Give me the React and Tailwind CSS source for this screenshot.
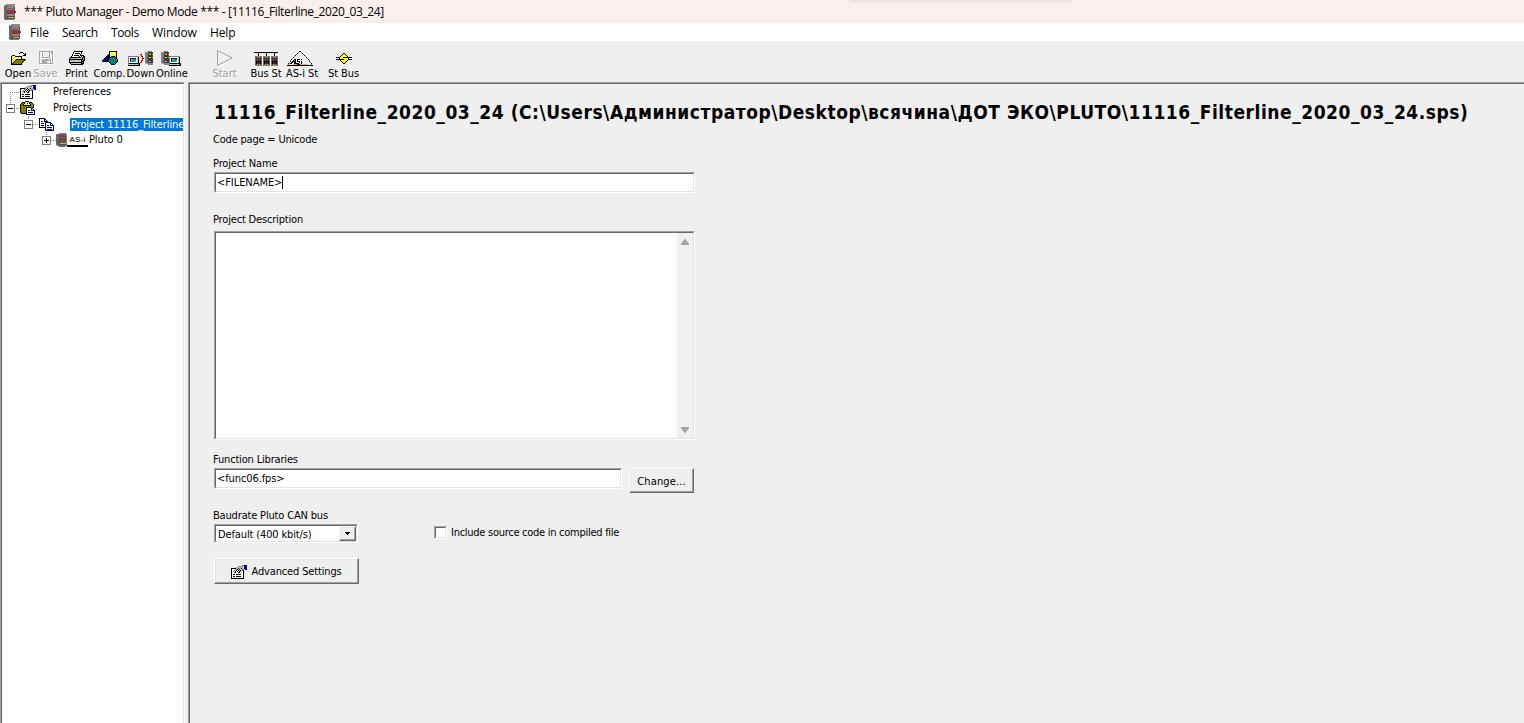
import React from 'react';

const PALETTE = {
  k: '#000000', w: '#ffffff', g: '#808080', l: '#c0c0c0', d: '#505050', y: '#ffff00', o: '#808000',
  b: '#0000a0', n: '#000080', t: '#008080', c: '#00d8d8', r: '#ff0000', a: '#a8a8a8', p: '#ffff9c', s: '#666666',
  e: '#383838', f: '#8a8a8a', q: '#d0bc30', m: '#e01438', z: '#303058', h: '#e0c020',
};

function Pixels({ rows, className = '' }) {
  const w = Math.max(...rows.map((r) => r.length));
  const cells = [];
  rows.forEach((row, y) => {
    let x = 0;
    while (x < row.length) {
      const ch = row[x];
      let n = 1;
      while (row[x + n] === ch) n++;
      if (PALETTE[ch]) cells.push(<rect key={`${x}-${y}`} x={x} y={y} width={n} height={1} fill={PALETTE[ch]} />);
      x += n;
    }
  });
  return (
    <svg width={w} height={rows.length} viewBox={`0 0 ${w} ${rows.length}`} shapeRendering="crispEdges" className={`block shrink-0 ${className}`}>
      {cells}
    </svg>
  );
}

const OPEN = [
  '..........kkk...',
  '.........k...k.k',
  '..............kk',
  '..kkk........kkk',
  '.kpypkkkkkkk....',
  '.kypypypypyk....',
  '.kpypypypypk....',
  '.kypypkkkkkkkkkk',
  '.kpypkooooooook.',
  '.kypkooooooook..',
  '.kpkooooooook...',
  '.kkooooooook....',
  '.kkkkkkkkkkk....',
];
const SAVE = [
  'aaaaaaaaaaaaaa.',
  'awwaw.....awaaw',
  'a.wa......a.aaw',
  'a.wa......a.waw',
  'a.wa......a.waw',
  'a.wa......a.waw',
  'a..aaaaaaaa.waw',
  'a..wwwwwwwwwwaw',
  'a..aaaaaaaaa.aw',
  'a..aaaaaaawa.aw',
  'a..aaaaa..wa.aw',
  'a..aaaaa..wa.aw',
  'aaaaaaaaaaaaaaw',
  '.wwwwwwwwwwwwww',
];
const PRINT = [
  '.....kkkkkkkkk..',
  '....kwwwwwwwk...',
  '....kwkkkkkwk...',
  '...kwwwwwwwk....',
  '...kwkkkkkwkkkk.',
  '..kwwwwwwwk.k.kk',
  '.kkkkkkkkkkk.kgk',
  'kllllllllllllkgk',
  'kkkkkkkkkkkkkkgk',
  'klllllyyllllkgkk',
  'klllllllllllkkk.',
  'kkkkkkkkkkkkkgk.',
  '.kllllllllllkkk.',
  '..kkkkkkkkkkkk..',
];
const COMP = [
  '.......kkkkkkkk',
  '.......kypyypyk',
  '.......kyyypyyk',
  '......nkpyyyypk',
  '.....nnkyypyyyk',
  '....nnnkykkkkyk',
  '...nnnnkkttttkk',
  '..nnnnnkttttttk',
  '.nnnnnkttttttttk',
  'nnnnnnkttttttttk',
  'kkkkkkkttttttttk',
  '.......kttttttk',
  '........kttttk.',
  '.........kkkk..',
];
const DEV = [
  '..ggggg.',
  'gg.dddee',
  'gfsdddee',
  'gfsdhheh',
  'gfseeeee',
  'gfsdzzze',
  'gfsdhheh',
  'gfsdeeee',
  'gfszzzde',
  'gfsdeeee',
  'gfsdhhee',
  'gfsdeeee',
  '.ggffffg',
  '...ggggg',
];
const PC = [
  'ggggggggggg.',
  'gwwwwwwwwlk.',
  'gwkkkkkkwlk.',
  'gwkcccttwlk.',
  'gwkccttcwlk.',
  'gwkcttccwlk.',
  'gwwwwwwwwlk.',
  'gkkkkkkkkkkk',
  'gwllllllllsk',
  'kkkkkkkkkkkk',
];
const ARROW = ['rr..', '.r..', '.rr.', '..r.', '..rr', '..r.', '.rr.', '.r..', 'rr..'];
const PREF = [
  '...........ggbbb',
  '.......gggggwbbb',
  '.....glllllllbbb',
  'kkkkkglkllkllbbb',
  'kwwwglklkllgg.bb',
  'kwwglkwklkggk...',
  'kwglkwkwkgwwk...',
  'kwwgkwwkkwwwk...',
  'kwwwwwwwwwwwk...',
  'kwkkwkkkkkwwk...',
  'kwwwwwwwwwwwk...',
  'kwkkwkkkkkwwk...',
  'kwwwwwwwwwwwk...',
  'kkkkkkkkkkkkk...',
];
const CLIP = [
  '.....kkkk......',
  '..kkkyyyykkk...',
  '.kookyykykook..',
  'kookyyyyyykook.',
  'kookkkkkkkkook.',
  'kooooooooooook.',
  'kooooonnnnnook.',
  'kooooonwwwwnn..',
  'kooooonwwwwnwn.',
  'kooooonwnnwnnnn',
  'kooooonwwwwwwwn',
  'kooooonwnnnnnwn',
  '.kkkkknwwwwwwwn',
  '......nnnnnnnnn',
];
const COPY = [
  'kkkkkk.........',
  'kwwwwkk........',
  'kwwwwkwk.......',
  'kwkkwkkkk......',
  'kwwwwwnnnnnn...',
  'kwkkkwnwwwwnn..',
  'kwwwwwnwwwwnwn.',
  'kwkkkwnwnnwnnnn',
  'kwwwwwnwwwwwwwn',
  'kkkkkknwnnnnnwn',
  '......nwwwwwwwn',
  '......nwnnnnnwn',
  '......nnnnnnnnn',
];
const APP = [
  '..fffffffff.',
  'ffffffffffg.',
  'ssssggggggf.',
  'sssfffffffd.',
  'sssgdgdgdgd.',
  'sssgggggggd.',
  'sssdddddddd.',
  'sssdmmmmmmmd',
  'sssdmmmmmmed',
  'sssdddddddd.',
  'sssgffffffg.',
  'sssgffffffg.',
  'sssdddddddd.',
  'sssdgqqqqqd.',
  'dssdddddddd.',
  '.ddggggggg..',
];
const BUS = [
  'kkkkkkkkkkkkkkkkkkkkkkkk',
  '....k.......k.......k...',
  '....k.......k.......k...',
  '....k.......k.......k...',
  '.ggggggg.ggggggg.ggggggg',
  '.sehehes.sehehes.sehehes',
  '.seeeees.seeeees.seeeees',
  '.seedees.seedees.seedees',
  '.semmmes.semmmes.semmmes',
  '.skkkkks.skkkkks.skkkkks',
  '.skzzzks.skzzzks.skzzzks',
  '.skeeeks.skeeeks.skeeeks',
  '.sehehes.sehehes.sehehes',
  '.ggggggg.ggggggg.ggggggg',
];
const ASI = [
  '............kk............',
  '...........g..g...........',
  '..........k....k..........',
  '.........g......g.........',
  '........k........k........',
  '.......g..........g.......',
  '......k............k......',
  '.....g..............g.....',
  '....k..kk.kkk.k......k....',
  '...g..kgk.k...........g...',
  '...k.kkkk.kkk.k.......k...',
  '..g.kk.kk...k.k........g..',
  '.k.kk..kkkkk..k.........k.',
  '.g....qqqqkkkqqqqqqqq...g.',
  'kkkkkkkkkkkkkkkkkkkkkkkkkk',
];
const STBUS = [
  '.......kk.......',
  '......kyyk......',
  '.....kyyyyk.....',
  '....kyyyyyyk....',
  'kkkkyyykkkkkkkkk',
  '...kyyyyyyyyk...',
  'kkkkkkkkyyyykkkk',
  '....kyyyyyyk....',
  '.....kyyyyk.....',
  '......kyyk......',
  '.......kk.......',
];
const TREEDEV = [
  '...ggggggg.',
  'ssssssssssg',
  'sssddddddgg',
  'sssdddddddg',
  'sssdsssssdg',
  'sssdddddddg',
  'sssdmmmmmmg',
  'sssdddddddg',
  'sssdsssssdg',
  'sssdddddddg',
  'sssdqqqqqqg',
  'sssdddddddg',
  '.ssssssssss',
  '...ssssss..',
];

const SUNK = 'border border-t-[#a0a0a0] border-l-[#a0a0a0] border-r-white border-b-white';
const SUNK_IN = 'border border-t-[#696969] border-l-[#696969] border-r-[#e3e3e3] border-b-[#e3e3e3]';

function Sunken({ className = '', children, inner = '' }) {
  return (
    <div className={`${SUNK} ${className}`}>
      <div className={`${SUNK_IN} flex h-full bg-white ${inner}`}>{children}</div>
    </div>
  );
}

function Raised({ className = '', inner = '', children }) {
  return (
    <button className={`block border border-t-white border-l-white border-r-[#696969] border-b-[#696969] ${className}`}>
      <span className={`flex h-full items-center justify-center border border-t-[#e3e3e3] border-l-[#e3e3e3] border-r-[#a0a0a0] border-b-[#a0a0a0] ${inner}`}>{children}</span>
    </button>
  );
}

function Tool({ label, className, text = '', children }) {
  return (
    <div className={`flex shrink-0 flex-col items-center ${className}`}>
      <div className="flex h-[18px] items-center justify-center">{children}</div>
      <span className={`h-[13px] whitespace-nowrap leading-[13px] ${text}`}>{label}</span>
    </div>
  );
}

function Expander({ open, className = '' }) {
  return (
    <svg width="9" height="9" viewBox="0 0 9 9" shapeRendering="crispEdges" className={`block shrink-0 ${className}`}>
      <rect x="0.5" y="0.5" width="8" height="8" fill="#fff" stroke="#808080" />
      <path d="M2 4.5H7" stroke="#000" />
      {!open && <path d="M4.5 2V7" stroke="#000" />}
    </svg>
  );
}

function Tree() {
  return (
    <div className="relative w-full overflow-hidden text-[11px]">
      <svg className="absolute left-0 top-0" width="60" height="64" viewBox="0 0 60 64" shapeRendering="crispEdges" fill="none" stroke="#808080" strokeDasharray="1 1">
        <path d="M8.5 8V20M8 8.5H18M12 24.5H18M26.5 32V37M31 40.5H36M44.5 48V53M49 56.5H54" />
      </svg>
      <div className="relative flex h-4 items-center">
        <Pixels rows={PREF} className="ml-[18px]" />
        <span className="ml-[17px] h-[14px] whitespace-nowrap leading-[14px]">Preferences</span>
      </div>
      <div className="relative flex h-4 items-center">
        <Expander open className="ml-1" />
        <Pixels rows={CLIP} className="ml-[5px]" />
        <span className="ml-[18px] h-[14px] whitespace-nowrap leading-[14px]">Projects</span>
      </div>
      <div className="relative flex h-4 items-center">
        <Expander open className="ml-[22px]" />
        <Pixels rows={COPY} className="ml-[6px]" />
        <span className="ml-[16px] h-[13px] min-w-0 flex-1 whitespace-nowrap bg-[#0078d7] pl-px leading-[13px] tracking-[-0.1px] text-white">Project 11116_Filterline</span>
      </div>
      <div className="relative flex h-4 items-center">
        <Expander className="ml-10" />
        <Pixels rows={TREEDEV} className="ml-[5px]" />
        <span className="mt-[2px] flex h-[12px] w-[21px] items-center justify-center border-b-2 border-black font-['Liberation_Sans'] text-[8px] leading-[8px] tracking-[0.2px]">AS-i</span>
        <span className="ml-px h-[14px] whitespace-nowrap leading-[14px] tracking-[-0.1px]">Pluto 0</span>
      </div>
    </div>
  );
}

export default function App() {
  return (
    <div className="flex h-[723px] w-[1524px] flex-col overflow-hidden bg-[#efefef] font-['DejaVu_Sans_Condensed','DejaVu_Sans',sans-serif] text-[11px] text-black [font-stretch:condensed]">
      <header className="relative flex h-[23px] shrink-0 items-center bg-[#f9f0ed] pl-1 font-['Open_Sans','Noto_Sans',sans-serif] text-[12px] [font-stretch:normal]">
        <Pixels rows={APP} />
        <span className="ml-[8px] whitespace-nowrap tracking-[-0.36px]">*** Pluto Manager - Demo Mode *** - [11116_Filterline_2020_03_24]</span>
        <div className="absolute left-[850px] top-[-4px] h-1 w-[222px] shadow-[0_0_4px_rgba(90,60,60,0.22)]" />
      </header>
      <nav className="flex h-[18px] shrink-0 items-center bg-white pl-[9px] font-['Open_Sans','Noto_Sans',sans-serif] text-[12px] leading-[18px] [font-stretch:normal]">
        <Pixels rows={APP} />
        <span className="ml-[9px] mt-[2px] w-8">File</span>
        <span className="mt-[2px] w-[49px] tracking-[-0.4px]">Search</span>
        <span className="mt-[2px] w-[41px] tracking-[-0.4px]">Tools</span>
        <span className="mt-[2px] w-[58px] tracking-[-0.1px]">Window</span>
        <span className="mt-[2px] tracking-[-0.15px]">Help</span>
      </nav>
      <div className="flex h-[41px] shrink-0 pt-2">
        <Tool label="Open" className="ml-1 w-7"><Pixels rows={OPEN} /></Tool>
        <Tool label="Save" className="w-[27px]" text="text-[#a0a0a0] [text-shadow:1px_1px_white]"><Pixels rows={SAVE} className="ml-[2px]" /></Tool>
        <Tool label="Print" className="ml-1 w-[27px]"><Pixels rows={PRINT} className="ml-px" /></Tool>
        <Tool label="Comp." className="ml-[3px] w-[33px]"><Pixels rows={COMP} className="ml-px" /></Tool>
        <Tool label="Down" className="ml-px w-[27px]">
          <Pixels rows={PC} className="mt-[5px]" /><Pixels rows={ARROW} /><Pixels rows={DEV} className="ml-px" />
        </Tool>
        <Tool label="Online" className="ml-[2px] w-[32px]">
          <Pixels rows={DEV} className="-ml-[3px]" /><Pixels rows={PC} className="mt-[5px]" />
        </Tool>
        <Tool label="Start" className="ml-[20px] w-[33px]" text="text-[#a0a0a0] [text-shadow:1px_1px_white]">
          <svg width="18" height="18" viewBox="0 0 18 18" fill="none"><path d="M2.5 2.5L17.5 9.5L2.5 17.5" stroke="#fff" /><path d="M1.5 1.5L16.5 9L1.5 16.5Z" stroke="#a0a0a0" /></svg>
        </Tool>
        <Tool label="Bus St" className="ml-[8px] w-[34px]" text="tracking-[-0.1px]"><Pixels rows={BUS} className="mt-px" /></Tool>
        <Tool label="AS-i St" className="ml-[1px] w-[36px]" text="tracking-[-0.1px]"><Pixels rows={ASI} className="-ml-[4px]" /></Tool>
        <Tool label="St Bus" className="ml-[6px] w-[35px]" text="tracking-[-0.1px]"><Pixels rows={STBUS} /></Tool>
      </div>
      <div className="flex min-h-0 flex-1">
        <aside className="w-[185px] shrink-0 border-t border-l border-r border-t-[#a0a0a0] border-l-[#a0a0a0] border-r-white">
          <div className="flex h-full border-t border-l border-r border-t-[#696969] border-l-[#696969] border-r-[#e3e3e3] bg-white"><Tree /></div>
        </aside>
        <main className="ml-[3px] min-w-0 flex-1 border-t border-l border-t-[#a0a0a0] border-l-[#a0a0a0]">
          <div className="h-full border-t border-l border-t-[#696969] border-l-[#696969] pl-[23px]">
            <h1 className="mt-[16px] h-6 whitespace-nowrap pl-px text-[19px] font-bold leading-6 tracking-[0.53px]">11116_Filterline_2020_03_24 (C:\Users\Администратор\Desktop\всячина\ДОТ ЭКО\PLUTO\11116_Filterline_2020_03_24.sps)</h1>
            <p className="mt-[9px] h-[13px] leading-[13px] tracking-[-0.2px]">Code page = Unicode</p>
            <p className="mt-[11px] h-[13px] leading-[13px] tracking-[-0.14px]">Project Name</p>
            <Sunken className="ml-px mt-[2px] h-[21px] w-[481px]" inner="items-center pl-px">
              <span className="mt-px tracking-[-0.06px]">&lt;FILENAME&gt;</span><span className="h-[13px] w-px bg-black" />
            </Sunken>
            <p className="mt-[20px] h-[13px] leading-[13px] tracking-[-0.17px]">Project Description</p>
            <Sunken className="ml-px mt-[5px] h-[209px] w-[481px]" inner="justify-end">
              <div className="flex w-4 flex-col items-center justify-between bg-[#f0f0f0] pb-1 pt-[5px]">
                <svg width="8" height="7" viewBox="0 0 8 7"><path d="M4 .5L8 6V7H0V6Z" fill="#a3a3a3" /></svg>
                <svg width="8" height="7" viewBox="0 0 8 7"><path d="M4 6.5L8 1V0H0V1Z" fill="#a3a3a3" /></svg>
              </div>
            </Sunken>
            <p className="mt-[13px] h-[13px] leading-[13px] tracking-[-0.17px]">Function Libraries</p>
            <div className="ml-px mt-[2px] flex gap-[7px]">
              <Sunken className="h-[21px] w-[408px]" inner="items-center pl-px pt-px"><span className="tracking-[-0.1px]">&lt;func06.fps&gt;</span></Sunken>
              <Raised className="h-[25px] w-[65px]" inner="pt-[3px] tracking-[0.12px]">Change...</Raised>
            </div>
            <p className="mt-[16px] h-[13px] leading-[13px] tracking-[-0.17px]">Baudrate Pluto CAN bus</p>
            <div className="ml-px mt-[2px] flex">
              <Sunken className="h-[19px] w-[144px]" inner="items-center justify-between pl-[2px]">
                <span className="mt-[3px] tracking-[-0.13px]">Default (400 kbit/s)</span>
                <Raised className="h-[15px] w-[17px] bg-[#f0f0f0]"><svg width="5" height="3" viewBox="0 0 5 3" shapeRendering="crispEdges"><path d="M0 0H5V1H4V2H3V3H2V2H1V1H0Z" /></svg></Raised>
              </Sunken>
              <Sunken className="ml-[76px] mt-[2px] h-[13px] w-[13px]" />
              <span className="ml-1 mt-[2px] h-[13px] whitespace-nowrap leading-[13px] tracking-[-0.27px]">Include source code in compiled file</span>
            </div>
            <Raised className="ml-px mt-[15px] h-[26px] w-[145px]" inner="pt-[2px] tracking-[-0.15px]"><Pixels rows={PREF} className="mr-1" />Advanced Settings</Raised>
          </div>
        </main>
      </div>
    </div>
  );
}
